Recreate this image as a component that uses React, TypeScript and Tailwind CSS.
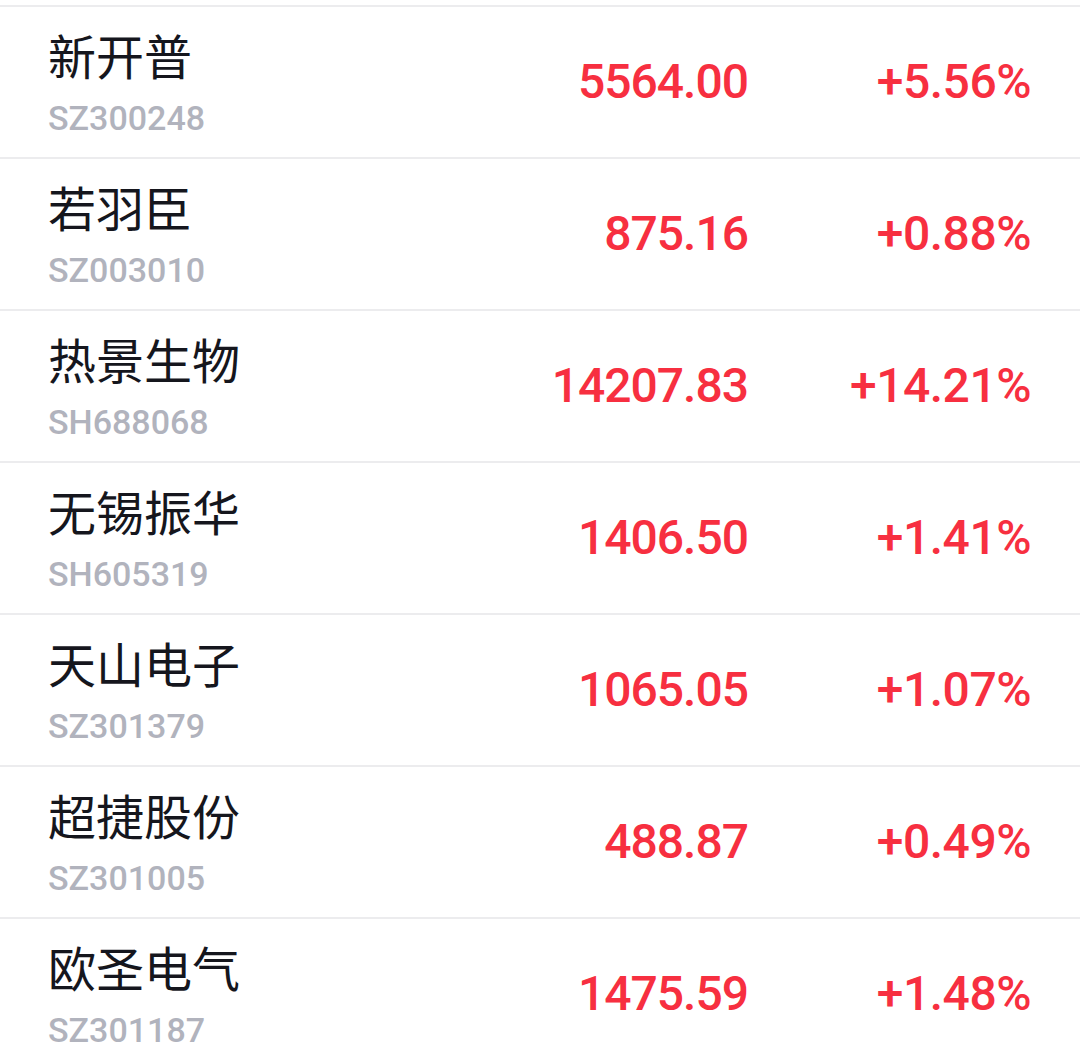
const stocks = [
  { name: '新开普', code: 'SZ300248', price: '5564.00', change: '+5.56%' },
  { name: '若羽臣', code: 'SZ003010', price: '875.16', change: '+0.88%' },
  { name: '热景生物', code: 'SH688068', price: '14207.83', change: '+14.21%' },
  { name: '无锡振华', code: 'SH605319', price: '1406.50', change: '+1.41%' },
  { name: '天山电子', code: 'SZ301379', price: '1065.05', change: '+1.07%' },
  { name: '超捷股份', code: 'SZ301005', price: '488.87', change: '+0.49%' },
  { name: '欧圣电气', code: 'SZ301187', price: '1475.59', change: '+1.48%' },
]

export default function App() {
  return (
    <div className="h-[1060px] w-[1080px] overflow-hidden bg-white pt-[5px]">
      {stocks.map((s) => (
        <div
          key={s.code}
          className="flex h-[152px] items-center border-t-2 border-[#ececee] pl-[48px] pr-[49px]"
        >
          <div className="flex flex-1 flex-col">
            <p className="text-[48px] leading-[56px] text-[#15161d] [font-family:'Noto_Sans_CJK_SC',sans-serif]">
              {s.name}
            </p>
            <p className="mt-[16px] text-[34px] font-medium leading-[40px] text-[#b1b3bd] [font-family:Roboto,sans-serif]">
              {s.code}
            </p>
          </div>
          <p className="text-right text-[48px] font-medium leading-none tracking-[-1px] text-[#f72f40] [font-family:Roboto,sans-serif]">
            {s.price}
          </p>
          <p className="w-[283px] text-right text-[48px] font-medium leading-none tracking-[-0.5px] text-[#f72f40] [font-family:Roboto,sans-serif]">
            {s.change}
          </p>
        </div>
      ))}
    </div>
  )
}
